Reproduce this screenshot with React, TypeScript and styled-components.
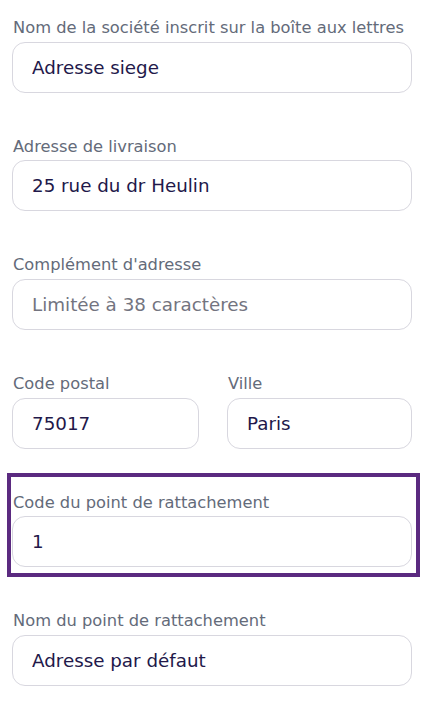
import React from 'react';
import styled, { createGlobalStyle } from 'styled-components';

const GlobalStyle = createGlobalStyle`
  html, body {
    margin: 0;
    padding: 0;
    background: #ffffff;
  }
  * {
    box-sizing: border-box;
  }
`;

const Form = styled.div`
  display: flex;
  flex-direction: column;
  gap: 42.2px;
  padding: 16px 20px 0 12px;
  font-family: "DejaVu Sans", "Open Sans", sans-serif;
`;

const Row = styled.div`
  display: grid;
  grid-template-columns: 187px 1fr;
  column-gap: 28px;
`;

const Field = styled.div<{ $highlighted?: boolean }>`
  position: relative;
  display: flex;
  flex-direction: column;
  gap: 1.5px;

  ${({ $highlighted }) =>
    $highlighted &&
    `
    &::before {
      content: '';
      position: absolute;
      top: -17.5px;
      left: -5px;
      right: -8px;
      bottom: -10px;
      border: 4px solid #5b2a80;
      pointer-events: none;
    }
  `}
`;

const Label = styled.label`
  display: block;
  padding-left: 1px;
  font-size: 16.3px;
  line-height: 24px;
  color: #646b7a;
  white-space: nowrap;
`;

const Input = styled.input`
  display: block;
  width: 100%;
  height: 51px;
  padding: 0 19px;
  border: 1.5px solid #d8d7df;
  border-radius: 13px;
  background: #ffffff;
  font-family: inherit;
  font-size: 18.3px;
  color: #22184a;
  outline: none;

  &::placeholder {
    color: #73747f;
    opacity: 1;
  }
`;

type FieldProps = {
  label: string;
  value?: string;
  placeholder?: string;
  highlighted?: boolean;
};

const TextField: React.FC<FieldProps> = ({ label, value, placeholder, highlighted }) => (
  <Field $highlighted={highlighted}>
    <Label>{label}</Label>
    <Input defaultValue={value} placeholder={placeholder} />
  </Field>
);

const App: React.FC = () => {
  return (
    <>
      <GlobalStyle />
      <Form>
        <TextField label="Nom de la société inscrit sur la boîte aux lettres" value="Adresse siege" />
        <TextField label="Adresse de livraison" value="25 rue du dr Heulin" />
        <TextField label="Complément d'adresse" placeholder="Limitée à 38 caractères" />
        <Row>
          <TextField label="Code postal" value="75017" />
          <TextField label="Ville" value="Paris" />
        </Row>
        <TextField label="Code du point de rattachement" value="1" highlighted />
        <TextField label="Nom du point de rattachement" value="Adresse par défaut" />
      </Form>
    </>
  );
};

export default App;
